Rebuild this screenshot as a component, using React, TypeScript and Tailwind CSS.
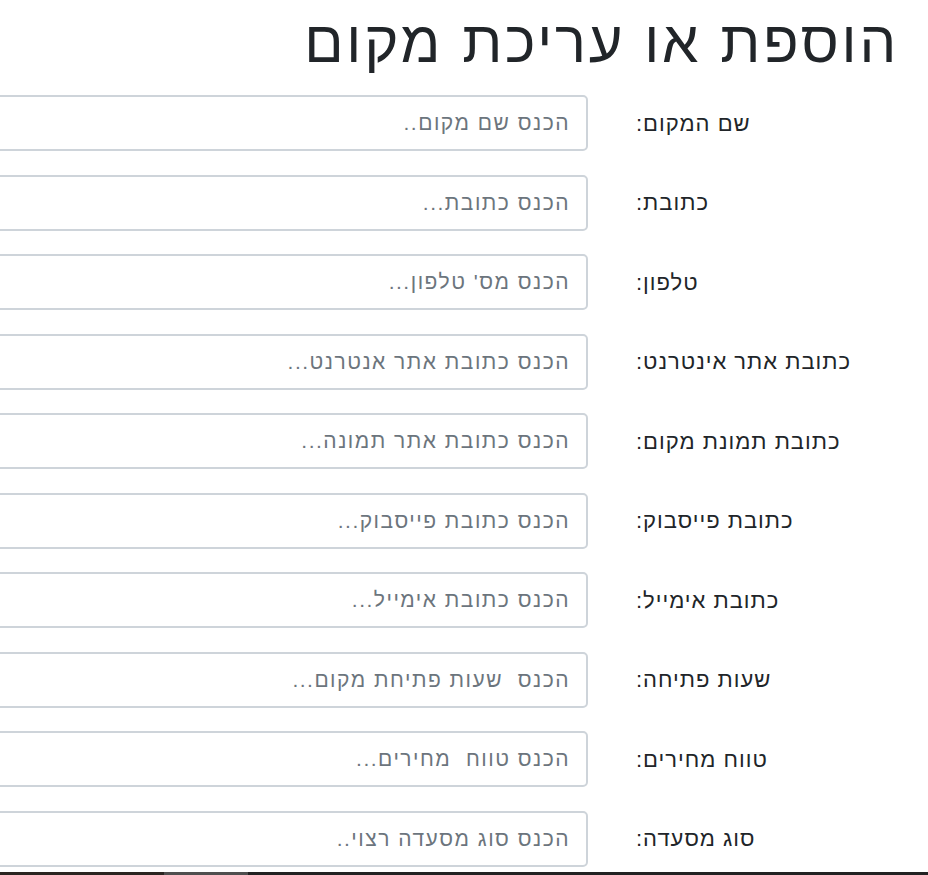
const fields = [
  { label: 'שם המקום:', placeholder: 'הכנס שם מקום..' },
  { label: 'כתובת:', placeholder: 'הכנס כתובת...' },
  { label: 'טלפון:', placeholder: "הכנס מס' טלפון..." },
  { label: 'כתובת אתר אינטרנט:', placeholder: 'הכנס כתובת אתר אנטרנט...' },
  { label: 'כתובת תמונת מקום:', placeholder: 'הכנס כתובת אתר תמונה...' },
  { label: 'כתובת פייסבוק:', placeholder: 'הכנס כתובת פייסבוק...' },
  { label: 'כתובת אימייל:', placeholder: 'הכנס כתובת אימייל...' },
  { label: 'שעות פתיחה:', placeholder: 'הכנס  שעות פתיחת מקום...' },
  { label: 'טווח מחירים:', placeholder: 'הכנס טווח  מחירים...' },
  { label: 'סוג מסעדה:', placeholder: 'הכנס סוג מסעדה רצוי..' },
]

export default function App() {
  return (
    <div
      dir="rtl"
      className="h-[875px] w-[928px] overflow-hidden bg-white flex flex-col text-[#212529] font-['Liberation_Sans','DejaVu_Sans',sans-serif]"
    >
      {/* Title */}
      <h1 className="pr-[29px] pt-[7px] text-[58px] leading-[1.2] tracking-[2.8px] font-medium whitespace-nowrap">
        הוספת או עריכת מקום
      </h1>

      {/* Form rows */}
      <form className="mt-[18.5px] flex flex-col gap-[23.5px]">
        {fields.map((f) => (
          <div key={f.label} className="grid grid-cols-[292px_1fr] gap-x-12 items-center h-[56px]">
            <label className="text-left text-[22px] tracking-[1px] whitespace-nowrap">{f.label}</label>
            <input
              type="text"
              placeholder={f.placeholder}
              className="w-[760px] h-[56px] shrink-0 rounded-[5px] border-2 border-[#ced4da] bg-white px-4 text-[21px] tracking-[1.5px] text-[#495057] placeholder:text-[#6c757d] outline-none"
            />
          </div>
        ))}
      </form>

      {/* Bottom scrollbar strip */}
      <div dir="ltr" className="mt-auto h-[3px] flex">
        <div className="w-[164px] bg-[#2a2521]" />
        <div className="w-[84px] bg-[#4f4f4f]" />
        <div className="flex-1 bg-[#222222]" />
      </div>
    </div>
  )
}
